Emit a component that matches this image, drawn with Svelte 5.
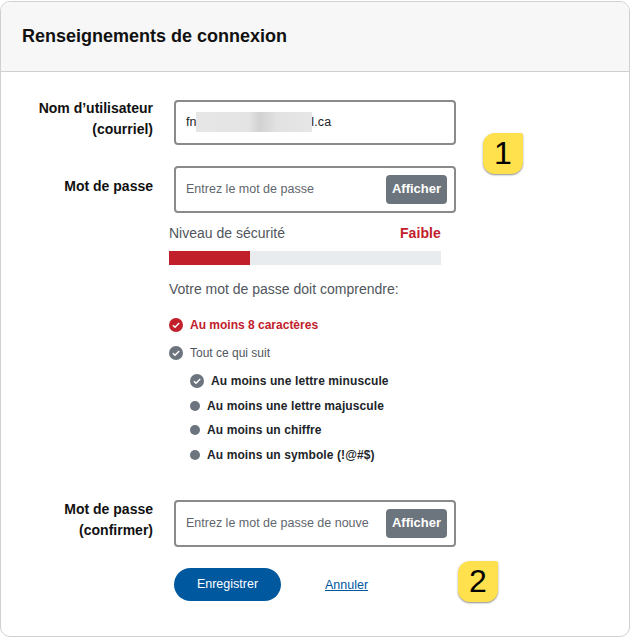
<script>
  const subRules = [
    { text: 'Au moins une lettre minuscule', met: true },
    { text: 'Au moins une lettre majuscule', met: false },
    { text: 'Au moins un chiffre', met: false },
    { text: 'Au moins un symbole (!@#$)', met: false }
  ];
</script>

{#snippet check(color)}
  <svg class="check" viewBox="0 0 14 14" width="14" height="14" aria-hidden="true">
    <circle cx="7" cy="7" r="7" fill={color} />
    <path d="M3.9 7.3 6 9.3 10.2 5" fill="none" stroke="#fff" stroke-width="1.5" />
  </svg>
{/snippet}

<div class="card">
  <header class="card-header">
    <h2>Renseignements de connexion</h2>
  </header>

  <form class="card-body">
    <div class="row">
      <label class="label" for="email">Nom d’utilisateur<br />(courriel)</label>
      <div class="field email">
        <input id="email" value="fnxxxxxxxxxxxxxxxxxxl.ca" />
        <span class="redact"></span>
      </div>
    </div>

    <div class="row pw-row">
      <label class="label" for="pw">Mot de passe</label>
      <div class="field">
        <input id="pw" placeholder="Entrez le mot de passe" />
        <button type="button" class="show">Afficher</button>
      </div>
    </div>

    <div class="strength">
      <div class="strength-head">
        <span>Niveau de sécurité</span>
        <strong>Faible</strong>
      </div>
      <div class="meter"><div class="meter-fill" style="width: 29.7%"></div></div>
      <p class="must">Votre mot de passe doit comprendre:</p>

      <ul class="rules">
        <li class="rule danger">{@render check('#c1202b')} Au moins 8 caractères</li>
        <li class="rule muted">{@render check('#6c757d')} Tout ce qui suit</li>
      </ul>
      <ul class="subrules">
        {#each subRules as rule}
          <li class="subrule" class:met={rule.met}>
            {#if rule.met}
              {@render check('#6c757d')}
            {:else}
              <span class="dot"></span>
            {/if}
            {rule.text}
          </li>
        {/each}
      </ul>
    </div>

    <div class="row confirm-row">
      <label class="label" for="pw2">Mot de passe<br />(confirmer)</label>
      <div class="field">
        <input id="pw2" placeholder="Entrez le mot de passe de nouve" />
        <button type="button" class="show">Afficher</button>
      </div>
    </div>

    <div class="actions">
      <button type="button" class="save">Enregistrer</button>
      <a href="#cancel" class="cancel">Annuler</a>
    </div>
  </form>

  <span class="badge one">1</span>
  <span class="badge two">2</span>
</div>

<style>
  :global(body) {
    margin: 0;
    background: #fff;
    font-family: "Liberation Sans", Arial, sans-serif;
  }

  .card {
    position: relative;
    box-sizing: border-box;
    width: 630px;
    height: 636px;
    margin-top: 1px;
    background: #fff;
    border: 1px solid #d0d0d0;
    border-radius: 10px;
    overflow: hidden;
  }

  .card-header {
    box-sizing: border-box;
    height: 70px;
    padding: 0 21px;
    display: flex;
    align-items: center;
    background: #f7f7f7;
    border-bottom: 1px solid #d0d0d0;
  }

  h2 {
    margin: 0 0 1px;
    font-size: 18px;
    font-weight: 700;
    color: #111;
  }

  .card-body {
    padding-top: 28px;
  }

  .row {
    display: grid;
    grid-template-columns: 152px 282px;
    column-gap: 21px;
  }

  .pw-row {
    margin-top: 21px;
  }

  .confirm-row {
    margin-top: 33px;
  }

  .label {
    margin-top: -2px;
    font-size: 14px;
    font-weight: 700;
    line-height: 21px;
    text-align: right;
    color: #111;
  }

  .pw-row .label {
    margin-top: 10px;
  }

  .confirm-row .label {
    margin-top: -1px;
  }

  .field {
    position: relative;
    box-sizing: border-box;
    height: 47px;
    display: flex;
    align-items: center;
    padding: 0 7px 0 10px;
    border: 2px solid #8a8a8a;
    border-radius: 4px;
  }

  .field.email {
    height: 45px;
  }

  input {
    flex: 1;
    min-width: 0;
    padding: 0 0 2px;
    border: 0;
    outline: 0;
    background: transparent;
    font: 12.5px "Liberation Sans", Arial, sans-serif;
    color: #222;
  }

  #email {
    letter-spacing: 0.12px;
  }

  input::placeholder {
    color: #5f666d;
    opacity: 1;
  }

  .redact {
    position: absolute;
    left: 20px;
    top: 10px;
    width: 116px;
    height: 20px;
    background: linear-gradient(90deg, #e6e6e6 0, #e4e4e4 45%, #d2d2d2 55%, #e2e2e2 70%, #e6e6e6 100%);
  }

  .show {
    flex: none;
    width: 61px;
    height: 29px;
    padding: 0 0 2px;
    border: 0;
    border-radius: 4px;
    background: #6c757d;
    color: #fff;
    font: 700 13px "Liberation Sans", Arial, sans-serif;
  }

  .strength {
    box-sizing: border-box;
    width: 272px;
    margin: 11px 0 0 168px;
  }

  .strength-head {
    display: flex;
    justify-content: space-between;
    font-size: 14px;
    line-height: 18px;
    color: #50565c;
  }

  .strength-head strong {
    color: #c1202b;
    letter-spacing: 0.1px;
  }

  .meter {
    height: 14px;
    margin-top: 9px;
    background: #e9ecef;
  }

  .meter-fill {
    height: 100%;
    background: #c1202b;
  }

  .must {
    margin: 15px 0 0;
    font-size: 14px;
    line-height: 18px;
    color: #50565c;
  }

  ul {
    list-style: none;
    margin: 0;
    padding: 0;
  }

  .rules {
    margin-top: 13px;
  }

  .rule {
    display: flex;
    align-items: center;
    gap: 7px;
    height: 28px;
    font-size: 12px;
  }

  .danger {
    font-weight: 700;
    color: #c1202b;
  }

  .muted {
    color: #50565c;
  }

  .subrules {
    margin: 2px 0 0 21px;
  }

  .subrule {
    display: flex;
    align-items: center;
    gap: 7px;
    height: 24.5px;
    font-size: 12px;
    font-weight: 700;
    letter-spacing: 0.1px;
    color: #212529;
  }

  .dot {
    flex: none;
    width: 10px;
    height: 10px;
    border-radius: 50%;
    background: #6c757d;
  }

  .check {
    flex: none;
  }

  .actions {
    display: flex;
    align-items: center;
    gap: 44px;
    margin: 21px 0 0 173px;
  }

  .save {
    width: 107px;
    height: 33px;
    padding: 0 0 2px;
    border: 0;
    border-radius: 17px;
    background: #00589f;
    color: #fff;
    font: 12.5px "Liberation Sans", Arial, sans-serif;
  }

  .cancel {
    font-size: 12.5px;
    color: #00589f;
  }

  .badge {
    position: absolute;
    display: flex;
    align-items: center;
    justify-content: center;
    width: 40px;
    height: 41px;
    background: #ffe14d;
    border-radius: 12px 2px 12px 12px;
    box-shadow: 0 1px 2px rgba(0, 0, 0, 0.45);
    font-size: 32px;
    color: #000;
  }

  .one {
    left: 482px;
    top: 131px;
  }

  .two {
    left: 457px;
    top: 559px;
  }
</style>
